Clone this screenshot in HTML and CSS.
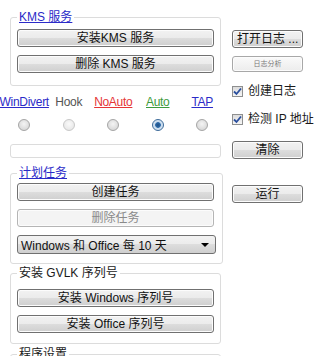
FILE: index.html
```html
<!DOCTYPE html>
<html lang="zh-CN">
<head>
    <meta charset="UTF-8">
    <title>KMS</title>
    <link rel="stylesheet" href="styles.css">
</head>
<body>
    <div class="window">
        <div class="left">
            <fieldset class="group kms">
                <legend><a class="link" href="#">KMS 服务</a></legend>
                <button class="btn">安装KMS 服务</button>
                <button class="btn">删除 KMS 服务</button>
            </fieldset>

            <div class="modes">
                <span class="mode blue">WinDivert</span>
                <span class="mode gray">Hook</span>
                <span class="mode red">NoAuto</span>
                <span class="mode green">Auto</span>
                <span class="mode blue">TAP</span>
            </div>
            <div class="radios">
                <span class="radio"></span>
                <span class="radio off"></span>
                <span class="radio"></span>
                <span class="radio on"></span>
                <span class="radio"></span>
            </div>

            <div class="status"></div>

            <fieldset class="group task">
                <legend><a class="link" href="#">计划任务</a></legend>
                <button class="btn">创建任务</button>
                <button class="btn" disabled>删除任务</button>
                <div class="select">
                    <span>Windows 和 Office 每 10 天</span>
                    <span class="arrow"></span>
                </div>
            </fieldset>

            <fieldset class="group gvlk">
                <legend>安装 GVLK 序列号</legend>
                <button class="btn">安装 Windows 序列号</button>
                <button class="btn">安装 Office 序列号</button>
            </fieldset>

            <fieldset class="group settings">
                <legend>程序设置</legend>
            </fieldset>
        </div>

        <div class="right">
            <button class="btn side open">打开日志 ...</button>
            <button class="btn side tiny">日志分析</button>
            <label class="check first"><span class="box"><svg width="9" height="9" viewBox="0 0 9 9"><path d="M1 4.5 L3.5 7 L8 1.5" fill="none" stroke="#2a4f9e" stroke-width="1.8"/></svg></span>创建日志</label>
            <label class="check second"><span class="box"><svg width="9" height="9" viewBox="0 0 9 9"><path d="M1 4.5 L3.5 7 L8 1.5" fill="none" stroke="#2a4f9e" stroke-width="1.8"/></svg></span>检测 IP 地址</label>
            <button class="btn side clear">清除</button>
            <button class="btn side run">运行</button>
        </div>
    </div>
</body>
</html>
```

FILE: styles.css
```css
body {
    margin: 0;
    padding: 0;
    background-color: #ffffff;
    font-family: "Liberation Sans", "Noto Sans CJK SC", sans-serif;
    font-size: 12px;
    color: #1a1a1a;
    overflow: hidden;
}

.window {
    display: flex;
    height: 356px;
}

.left {
    width: 221px;
}

.right {
    width: 71px;
    margin-left: 11px;
    display: flex;
    flex-direction: column;
}

.group {
    margin: 0 0 0 10px;
    width: 211px;
    box-sizing: border-box;
    border: 1px solid #dcdcdc;
    border-radius: 3px;
    padding: 0 6px;
    display: flex;
    flex-direction: column;
}

.group legend {
    padding: 0 2px;
    line-height: 14px;
    height: 14px;
}

.link {
    color: #2b2bc8;
    text-decoration: underline;
}

.kms {
    margin-top: 10px;
    padding-top: 5px;
    padding-bottom: 12px;
}

.task {
    margin-top: 8px;
    padding-top: 3px;
    padding-bottom: 9px;
}

.gvlk {
    margin-top: 2px;
    padding-top: 9px;
    padding-bottom: 10px;
}

.settings {
    margin-top: 3px;
    height: 40px;
}

.btn {
    font-family: inherit;
    font-size: 12px;
    color: #111;
    height: 18px;
    line-height: 14px;
    padding: 0;
    border: 1px solid #707070;
    border-radius: 3px;
    background: linear-gradient(#f2f2f2 0%, #ebebeb 50%, #dddddd 50%, #cfcfcf 100%);
    box-shadow: inset 0 0 0 1px #fcfcfc;
    width: 197px;
}

.btn + .btn {
    margin-top: 8px;
}

.btn:disabled {
    color: #8a8a8a;
    border-color: #b5b5b5;
    background: #f4f4f4;
}

.select {
    margin-top: 8px;
    width: 199px;
    height: 19px;
    box-sizing: border-box;
    border: 1px solid #707070;
    border-radius: 3px;
    background: linear-gradient(#f2f2f2 0%, #ebebeb 50%, #dddddd 50%, #cfcfcf 100%);
    display: flex;
    align-items: center;
    justify-content: space-between;
    padding: 0 6px 0 3px;
    color: #111;
}

.arrow {
    width: 0;
    height: 0;
    border-left: 4px solid transparent;
    border-right: 4px solid transparent;
    border-top: 4px solid #000;
}

.modes,
.radios {
    display: grid;
    grid-template-columns: repeat(5, 44.5px);
    margin-left: 2px;
    justify-items: center;
}

.modes {
    margin-top: 9px;
    line-height: 14px;
    letter-spacing: -0.3px;
}

.mode.blue {
    color: #2b2bc8;
    text-decoration: underline;
}

.mode.gray {
    color: #555;
}

.mode.red {
    color: #e53535;
    text-decoration: underline;
}

.mode.green {
    color: #3d9a3d;
    text-decoration: underline;
}

.radios {
    margin-top: 10px;
}

.radio {
    width: 10px;
    height: 10px;
    border: 1px solid #a5a5a5;
    border-radius: 50%;
    background: radial-gradient(circle at 50% 40%, #f4f4f4 0%, #cfcfcf 100%);
    position: relative;
}

.radio.off {
    border-color: #c8c8c8;
    background: radial-gradient(circle at 50% 40%, #fafafa 0%, #e2e2e2 100%);
}

.radio.on {
    border-color: #3c6a99;
    background: radial-gradient(circle at 50% 50%, #1d4f86 0%, #2e6aa8 35%, #c8dbee 45%, #e4eef8 100%);
}

.status {
    margin: 13px 0 0 10px;
    width: 211px;
    height: 14px;
    box-sizing: border-box;
    border: 1px solid #dcdcdc;
    border-radius: 3px;
}

.side {
    width: 71px;
}

.btn.side + .btn.side {
    margin-top: 8px;
}

.open {
    margin-top: 30px;
    text-align: left;
    padding-left: 4px;
}

.tiny {
    height: 16px;
    font-size: 7px;
    color: #7a7a7a;
    border-color: #a8a8a8;
    background: linear-gradient(#fafafa, #ececec);
}

.check {
    display: flex;
    align-items: center;
    line-height: 14px;
    white-space: nowrap;
}

.check.first {
    margin-top: 12px;
}

.check.second {
    margin-top: 14px;
}

.box {
    width: 11px;
    height: 11px;
    box-sizing: border-box;
    border: 1px solid #8e8f8f;
    background: linear-gradient(#dcdcdc, #f6f6f6);
    margin-right: 5px;
    display: flex;
    align-items: center;
    justify-content: center;
}

.clear {
    margin-top: 15px;
}

.run {
    margin-top: 26px !important;
}
```
